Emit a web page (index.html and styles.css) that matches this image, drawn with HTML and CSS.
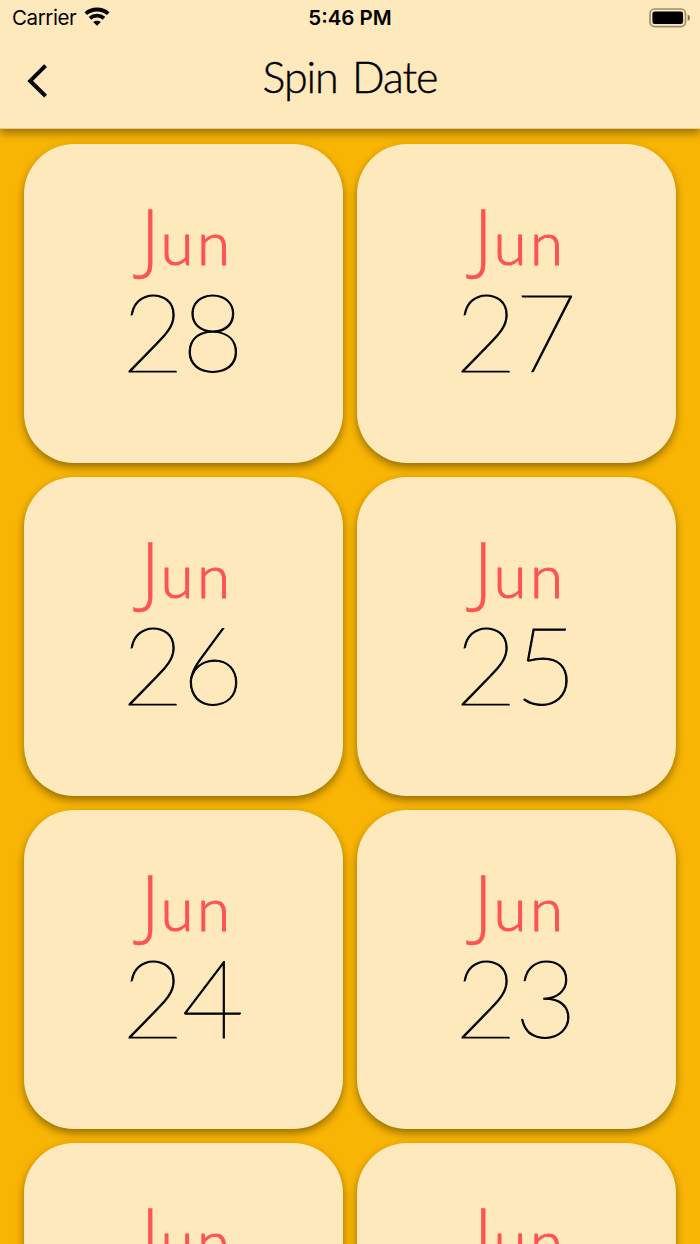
FILE: index.html
```html
<!DOCTYPE html>
<html lang="en">
<head>
<meta charset="utf-8">
<title>Spin Date</title>
<link rel="stylesheet" href="styles.css">
</head>
<body>
<div class="screen">
  <header class="header">
    <div class="status">
      <div class="status-left">
        <span class="carrier">Carrier</span>
        <svg class="wifi" width="26" height="20" viewBox="0 0 26 20">
          <g fill="none" stroke="#000" stroke-width="3.9">
            <path d="M1.800 6.600C8 1.200 18 1.200 24.200 6.600"/>
            <path d="M6 11.200C10 7.800 16 7.800 20 11.200"/>
          </g>
          <path d="M13 18.800L9.200 15C11.300 13.300 14.700 13.300 16.800 15Z"/>
        </svg>
      </div>
      <span class="time">5:46 PM</span>
      <div class="status-right">
        <svg class="battery" width="42" height="20" viewBox="0 0 42 20">
          <rect x="1" y="1" width="35.500" height="17.600" rx="4.500" fill="none" stroke="#9b8e70" stroke-width="1.600"/>
          <rect x="3.400" y="3.500" width="30.700" height="12.600" rx="2.300"/>
          <path d="M38.700 6.600Q41 7.600 41 9.800T38.700 13Z" fill="#7f745c"/>
        </svg>
      </div>
    </div>
    <div class="nav">
      <svg class="back" width="24" height="36" viewBox="0 0 24 36"><path d="M19.600 2.600L4.200 17.900L19.600 33.200" fill="none" stroke="#000" stroke-width="4"/></svg>
      <h1 class="title">Spin Date</h1>
    </div>
  </header>
  <main class="grid">
    <div class="card"><div class="month"><span class="cap">J</span>un</div><div class="day">28</div></div>
    <div class="card"><div class="month"><span class="cap">J</span>un</div><div class="day">27</div></div>
    <div class="card"><div class="month"><span class="cap">J</span>un</div><div class="day">26</div></div>
    <div class="card"><div class="month"><span class="cap">J</span>un</div><div class="day">25</div></div>
    <div class="card"><div class="month"><span class="cap">J</span>un</div><div class="day">24</div></div>
    <div class="card"><div class="month"><span class="cap">J</span>un</div><div class="day">23</div></div>
    <div class="card"><div class="month"><span class="cap">J</span>un</div><div class="day">22</div></div>
    <div class="card"><div class="month"><span class="cap">J</span>un</div><div class="day">21</div></div>
  </main>
</div>
</body>
</html>
```
FILE: styles.css
```css
* { box-sizing: border-box; }
body { margin: 0; }
.screen {
  width: 700px;
  height: 1244px;
  overflow: hidden;
  background: #f9b504;
  color: #000;
  font-family: Lato, "Liberation Sans", sans-serif;
}
.header {
  position: relative;
  height: 129px;
  border-bottom: 1px solid #e3cc8f;
  background: #fde9bb;
  box-shadow: 0 4px 9px rgba(0, 0, 0, .4);
}
.status {
  display: grid;
  grid-template-columns: 1fr auto 1fr;
  align-items: center;
  height: 36px;
  padding: 0 9px 0 12px;
  font-family: Inter, "Liberation Sans", sans-serif;
  font-size: 20.500px;
  line-height: 36px;
}
.status-left { display: flex; align-items: center; gap: 8px; }
.status-right { display: flex; justify-content: flex-end; }
.carrier { letter-spacing: -.4px; }
.wifi { margin-top: -2px; }
.time { margin-right: 3px; font-weight: 600; }
.nav {
  display: grid;
  grid-template-columns: 100px 1fr 100px;
  align-items: center;
  height: 90px;
}
.back { margin-left: 26px; }
.title {
  margin: -8px 0 0;
  text-align: center;
  font-size: 43px;
  font-weight: 300;
  line-height: 60px;
  letter-spacing: -1.100px;
  word-spacing: 4px;
  -webkit-text-stroke: .4px #000;
}
.grid {
  display: grid;
  grid-template-columns: 319px 319px;
  grid-auto-rows: 319px;
  gap: 14px;
  padding: 14.700px 24px 0;
}
.card {
  display: flex;
  flex-direction: column;
  align-items: center;
  padding-top: 58px;
  border-radius: 50px;
  background: #fde9bb;
  box-shadow: 0 4px 9px rgba(0, 0, 0, .4);
}
.month {
  height: 78px;
  margin-left: 7px;
  color: #ff5252;
  font-size: 60px;
  font-weight: 300;
  line-height: 80px;
  letter-spacing: 3.500px;
  -webkit-text-stroke: 1px #ff5252;
}
.cap {
  font-family: "Open Sans", sans-serif;
  font-size: 77px;
  line-height: 0;
  letter-spacing: 1px;
  -webkit-text-stroke: .4px #ff5252;
}
.day {
  height: 100px;
  margin-right: 4px;
  font-size: 108px;
  font-weight: 100;
  line-height: 100px;
  letter-spacing: -3px;
  -webkit-text-stroke: 1px #000;
}
```
